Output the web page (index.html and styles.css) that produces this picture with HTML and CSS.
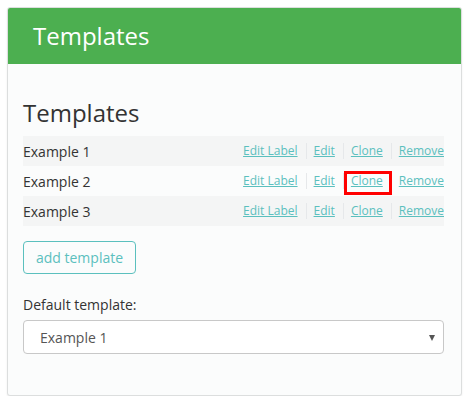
FILE: index.html
```html
<!DOCTYPE html>
<html>
<head>
<meta charset="utf-8">
<link rel="stylesheet" href="styles.css">
</head>
<body>
<div class="card">
  <div class="card-header">Templates</div>
  <div class="card-body">
    <h2 class="title">Templates</h2>
    <ul class="list">
      <li class="row">
        <span class="name">Example 1</span>
        <span class="actions">
          <a class="link">Edit Label</a><span class="sep"></span>
          <a class="link">Edit</a><span class="sep"></span>
          <a class="link">Clone</a><span class="sep"></span>
          <a class="link">Remove</a>
        </span>
      </li>
      <li class="row">
        <span class="name">Example 2</span>
        <span class="actions">
          <a class="link">Edit Label</a><span class="sep"></span>
          <a class="link">Edit</a><span class="sep"></span>
          <a class="link highlight">Clone</a><span class="sep"></span>
          <a class="link">Remove</a>
        </span>
      </li>
      <li class="row">
        <span class="name">Example 3</span>
        <span class="actions">
          <a class="link">Edit Label</a><span class="sep"></span>
          <a class="link">Edit</a><span class="sep"></span>
          <a class="link">Clone</a><span class="sep"></span>
          <a class="link">Remove</a>
        </span>
      </li>
    </ul>
    <button class="btn">add template</button>
    <label class="label">Default template:</label>
    <div class="select">
      <span class="select-value">Example 1</span>
      <span class="caret"></span>
    </div>
  </div>
</div>
</body>
</html>
```
FILE: styles.css
```css
* { box-sizing: border-box; }
html, body { margin: 0; padding: 0; background: #ffffff; }
body { font-family: "Open Sans", "Noto Sans", sans-serif; color: #333; }
.card {
  margin: 7px 0 0 7px;
  width: 455px;
  height: 389px;
  border: 1px solid #dcdede;
  border-radius: 3px;
  background: #fbfcfc;
  box-shadow: 0 1px 2px rgba(0,0,0,0.08);
  overflow: hidden;
}
.card-header {
  background: #4caf50;
  color: #fff;
  height: 56px;
  padding-left: 25px;
  font-size: 24px;
  line-height: 56px;
}
.card-body { padding: 0 17px 0 15px; }
.title {
  margin: 0;
  padding-top: 32px;
  font-size: 24px;
  font-weight: 400;
  line-height: 34px;
  color: #333;
  height: 72px;
}
.list { list-style: none; margin: 0; padding: 0; }
.row {
  display: flex;
  align-items: center;
  justify-content: space-between;
  height: 30px;
  font-size: 14px;
}
.row:nth-child(odd) { background: #f4f5f5; }
.name { color: #333; }
.actions { display: flex; align-items: center; font-size: 12px; }
.link { color: #5bc0be; text-decoration: underline; cursor: pointer; line-height: 16px; }
.sep { width: 1px; height: 16px; background: #e6e8ea; margin: 0 7px 0 8px; }
.highlight { position: relative; }
.highlight::after {
  content: "";
  position: absolute;
  top: -2px;
  bottom: -6px;
  left: -7px;
  right: -9px;
  border: 3px solid #ff0000;
}
.btn {
  display: block;
  margin-top: 15px;
  height: 33px;
  width: 113px;
  background: transparent;
  border: 1px solid #5bc0be;
  border-radius: 4px;
  color: #5bc0be;
  font-family: inherit;
  font-size: 14px;
  padding: 0;
}
.label { display: block; margin-top: 21px; font-size: 14px; color: #333; line-height: 20px; }
.select {
  margin-top: 5px;
  height: 34px;
  border: 1px solid #c8c8c8;
  border-radius: 4px;
  background: #fff;
  display: flex;
  align-items: center;
  justify-content: space-between;
  padding: 0 8px 0 16px;
  font-size: 14px;
  color: #555;
}
.caret {
  width: 0;
  height: 0;
  border-left: 3px solid transparent;
  border-right: 3px solid transparent;
  border-top: 6px solid #555;
  margin-top: 1px;
}
```
